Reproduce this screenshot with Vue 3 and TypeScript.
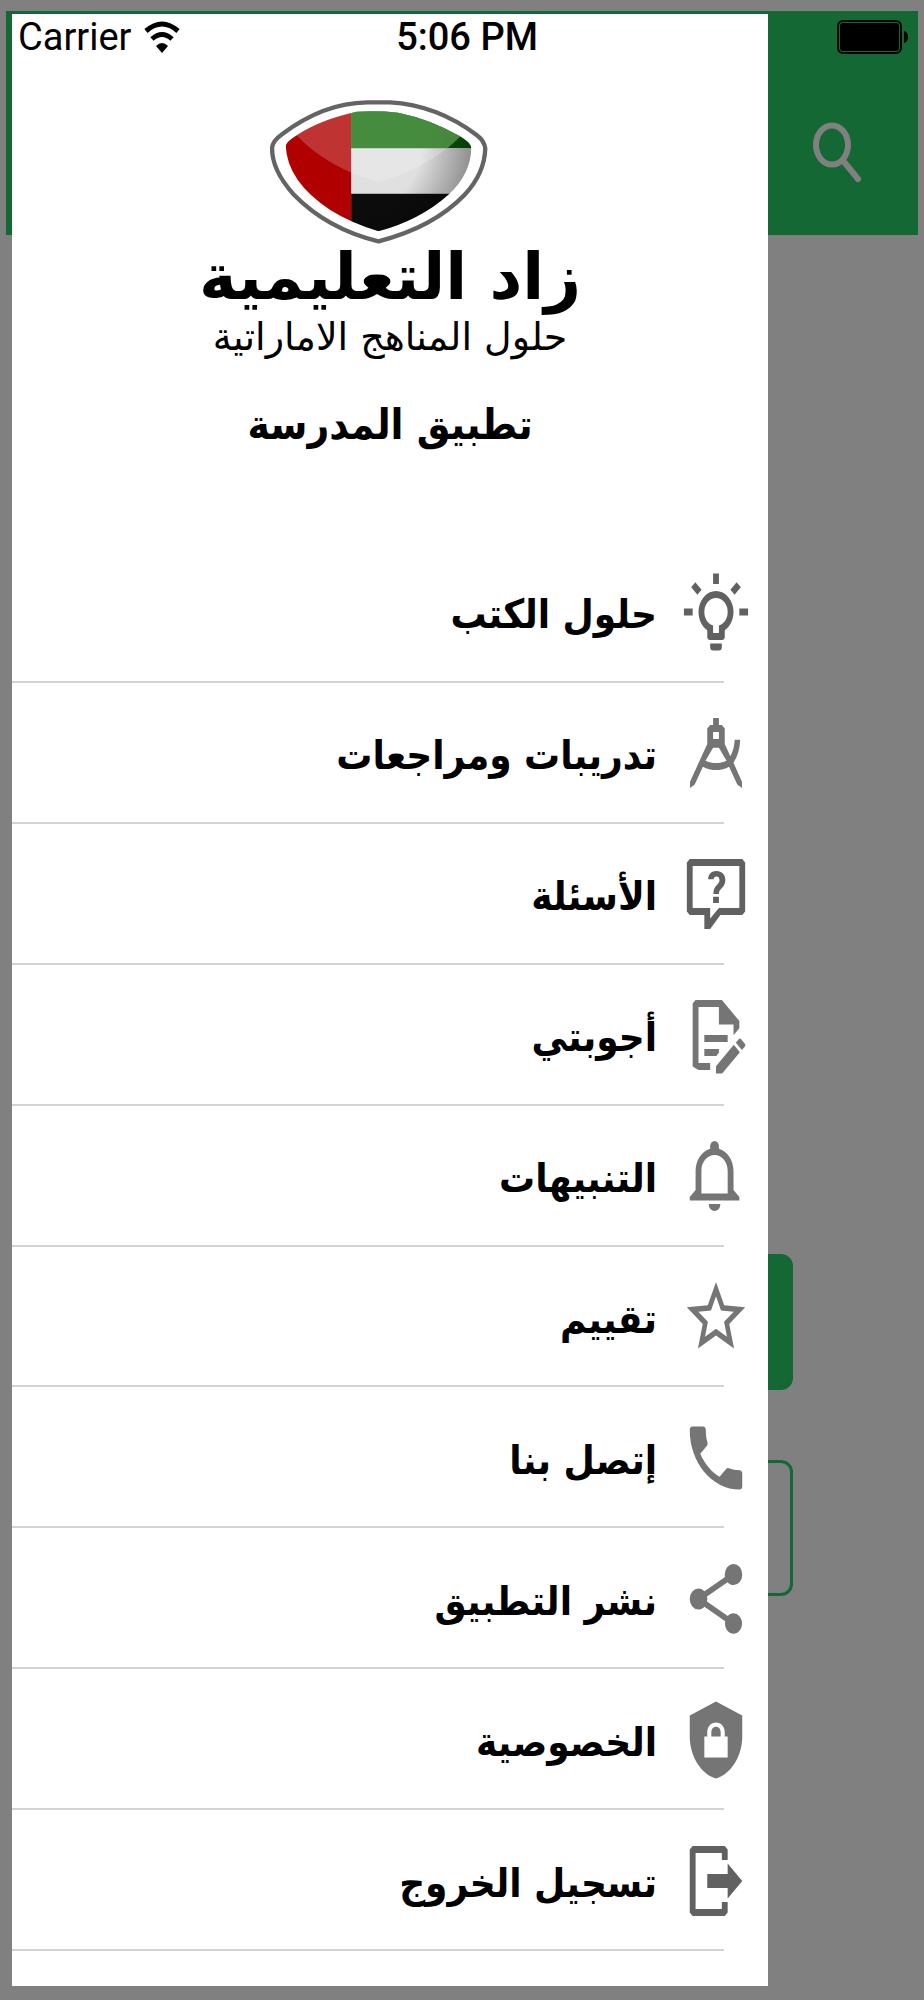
<script setup lang="ts">
interface MenuItem {
  label: string
  icon: string
  dark?: boolean
}

const items: MenuItem[] = [
  { label: 'حلول الكتب', icon: 'bulb', dark: true },
  { label: 'تدريبات ومراجعات', icon: 'compass' },
  { label: 'الأسئلة', icon: 'question', dark: true },
  { label: 'أجوبتي', icon: 'answers' },
  { label: 'التنبيهات', icon: 'bell' },
  { label: 'تقييم', icon: 'star' },
  { label: 'إتصل بنا', icon: 'phone' },
  { label: 'نشر التطبيق', icon: 'share' },
  { label: 'الخصوصية', icon: 'privacy' },
  { label: 'تسجيل الخروج', icon: 'logout', dark: true },
]

const paths: Record<string, string> = {
  bulb: 'M20,11H23V13H20V11M1,11H4V13H1V11M13,1V4H11V1H13M4.92,3.5L7.05,5.64L5.63,7.05L3.5,4.93L4.92,3.5M16.95,5.63L19.07,3.5L20.5,4.93L18.37,7.05L16.95,5.63M12,6A6,6 0 0,1 18,12C18,14.22 16.79,16.16 15,17.2V19A1,1 0 0,1 14,20H10A1,1 0 0,1 9,19V17.2C7.21,16.16 6,14.22 6,12A6,6 0 0,1 12,6M14,21V22A1,1 0 0,1 13,23H11A1,1 0 0,1 10,22V21H14M11,18H13V15.87C14.73,15.43 16,13.86 16,12A4,4 0 0,0 12,8A4,4 0 0,0 8,12C8,13.86 9.27,15.43 11,15.87V18Z',
  compass: 'M11,2H13V4H14L15,5V9.4L16.9,12.9C17.8,11.6 18.3,10.1 18.4,8.2H20.3C20.2,10.8 19.4,13 18,14.8L20.9,20.2V22L19.3,21L16.5,15.9C13.8,17.2 10.2,17.2 7.5,15.9L4.7,21L3.1,22V20.2L9,9.4V5L10,4H11V2M11,6V8H13V6H11M11,10.5L8.4,14.2C10.7,15.1 13.3,15.1 15.6,14.2L13,10.5H11Z',
  question: 'M3,2H21L22,3V17L21,18H13.5L10,22H8V18H3L2,17V3L3,2M4,4V16H10V19L13,16H20V4H4M9.3,7.8C9.3,6.3 10.4,5.4 12.2,5.4C14,5.4 15.2,6.4 15.2,8C15.2,9.1 14.6,9.8 13.8,10.5C13.2,11 13,11.3 13,12H11.1C11.1,10.7 11.5,10.1 12.3,9.4C12.9,8.9 13.2,8.6 13.2,8C13.2,7.4 12.8,7 12.2,7C11.6,7 11.2,7.3 11.2,7.8H9.3M11,12.8H13V14.6H11Z',
  answers: 'M13,2H14L20,8V10.1L18,12.1V9H13V4H6V20H10V22H6L4,21V3L5,2H13M8,12H16V14H8V12M8,16H13V17.1L12.1,18H8V16M20.2,13C20.3,13 20.5,13.1 20.6,13.2L21.9,14.5C22.1,14.7 22.1,15.1 21.9,15.3L20.9,16.3L18.8,14.2L19.8,13.2C19.9,13.1 20,13 20.2,13M20.2,16.9L14.1,23H12V20.9L18.1,14.8L20.2,16.9Z',
  bell: 'M16,17H7V10.5C7,8 9,6 11.5,6C14,6 16,8 16,10.5M18,16V10.5C18,7.43 15.86,4.86 13,4.18V3.5A1.5,1.5 0 0,0 11.5,2A1.5,1.5 0 0,0 10,3.5V4.18C7.13,4.86 5,7.43 5,10.5V16L3,18V19H20V18M11.5,22A2,2 0 0,0 13.5,20H9.5A2,2 0 0,0 11.5,22Z',
  star: 'M12,15.39L8.24,17.66L9.23,13.38L5.91,10.5L10.29,10.13L12,6.09L13.71,10.13L18.09,10.5L14.77,13.38L15.76,17.66M22,9.24L14.81,8.63L12,2L9.19,8.63L2,9.24L7.45,13.97L5.82,21L12,17.27L18.18,21L16.54,13.97L22,9.24Z',
  phone: 'M6.62,10.79C8.06,13.62 10.38,15.94 13.21,17.38L15.41,15.18C15.69,14.9 16.08,14.82 16.43,14.93C17.55,15.3 18.75,15.5 20,15.5A1,1 0 0,1 21,16.5V20A1,1 0 0,1 20,21A17,17 0 0,1 3,4A1,1 0 0,1 4,3H7.5A1,1 0 0,1 8.5,4C8.5,5.25 8.7,6.45 9.07,7.57C9.18,7.92 9.1,8.31 8.82,8.59L6.62,10.79Z',
  share: 'M18,16.08C17.24,16.08 16.56,16.38 16.04,16.85L8.91,12.7C8.96,12.47 9,12.24 9,12C9,11.76 8.96,11.53 8.91,11.3L15.96,7.19C16.5,7.69 17.21,8 18,8A3,3 0 0,0 21,5A3,3 0 0,0 18,2A3,3 0 0,0 15,5C15,5.24 15.04,5.47 15.09,5.7L8.04,9.81C7.5,9.31 6.79,9 6,9A3,3 0 0,0 3,12A3,3 0 0,0 6,15C6.79,15 7.5,14.69 8.04,14.19L15.16,18.34C15.11,18.55 15.08,18.77 15.08,19C15.08,20.61 16.39,21.91 18,21.91C19.61,21.91 20.92,20.61 20.92,19A2.92,2.92 0 0,0 18,16.08Z',
  privacy: 'M12,1L3,5V11C3,16.55 6.84,21.74 12,23C17.16,21.74 21,16.55 21,11V5L12,1M12,7C13.7,7 15,8.2 15,9.8V11H16V17H8V11H9V9.8C9,8.2 10.3,7 12,7M12,8.2C11,8.2 10.4,8.9 10.4,9.8V11H13.6V9.8C13.6,8.9 13,8.2 12,8.2Z',
  logout: 'M4,2H15L16,3V6H14V4H5V20H14V18H16V21L15,22H4L3,21V3L4,2M9,10H16V7L21,12L16,17V14H9V10Z',
}
</script>

<template>
  <div class="page" dir="rtl">
    <div class="screen">
      <header class="app-bar">
        <button class="search" type="button" aria-label="بحث">
          <svg viewBox="0 0 50 62" aria-hidden="true">
            <ellipse cx="20" cy="23" rx="16" ry="19.5" />
            <path d="M33 41 46 57" />
          </svg>
        </button>
      </header>
      <div class="actions">
        <button class="action filled" type="button" aria-label="متابعة"></button>
        <button class="action outlined" type="button" aria-label="تخطي"></button>
      </div>
    </div>

    <aside class="drawer">
      <div class="brand">
        <svg class="emblem" viewBox="80 50 670 445" aria-hidden="true">
          <defs>
            <clipPath id="shield">
              <path d="M136 196Q138 184 174 162Q240 118 350 94Q415 90 474 97Q570 116 660 168Q690 186 694 200Q694 280 625 344Q540 420 415 454Q330 428 270 390Q140 304 136 196Z" />
            </clipPath>
            <radialGradient id="shade" gradientUnits="userSpaceOnUse" cx="330" cy="190" r="390">
              <stop offset="0.55" stop-color="#000" stop-opacity="0" />
              <stop offset="1" stop-color="#000" stop-opacity="0.42" />
            </radialGradient>
          </defs>
          <path
            class="rim"
            d="M415 484Q260 446 160 343Q94 270 95 203Q96 182 126 161Q250 68 380 66H450Q590 74 710 164Q734 182 736 205Q734 280 674 344Q580 442 415 484Z"
          />
          <g clip-path="url(#shield)">
            <path fill="#b00000" d="M130 90H334V460H130Z" />
            <path fill="#0b5c0b" d="M333 88H700V204H333Z" />
            <path fill="#e0e0e0" d="M333 204H700V341H333Z" />
            <path fill="#0c0c0c" d="M333 341H700V460H333Z" />
            <path fill="url(#shade)" d="M130 88H700V460H130Z" />
            <path fill="#fff" fill-opacity="0.2" d="M168 164Q260 80 415 80Q580 80 664 166Q570 262 415 306Q260 262 168 164Z" />
            <path fill="#4a9040" fill-opacity="0.8" d="M333 88Q560 70 664 166L622 204H333Z" />
          </g>
        </svg>
        <h1 class="name">زاد التعليمية</h1>
        <p class="tagline">حلول المناهج الاماراتية</p>
        <h2 class="title">تطبيق المدرسة</h2>
      </div>

      <nav class="menu">
        <a v-for="item in items" :key="item.icon" class="item" href="#">
          <svg class="icon" :class="{ dark: item.dark }" viewBox="0 0 24 24" preserveAspectRatio="none" aria-hidden="true">
            <path fill-rule="evenodd" :d="paths[item.icon]" />
          </svg>
          <span class="label">{{ item.label }}</span>
        </a>
      </nav>
    </aside>

    <div class="status" dir="ltr">
      <div class="carrier">
        <span>Carrier</span>
        <svg class="wifi" viewBox="0 0 36 34" aria-hidden="true">
          <path class="arc" d="M2 11Q18-3 34 11M8 19Q18 10 28 19" />
          <path d="M12 26Q18 20 24 26L18 33Z" />
        </svg>
      </div>
      <span class="time">5:06 PM</span>
      <svg class="battery" viewBox="0 0 72 34" aria-hidden="true">
        <rect class="case" x="1" y="1" width="63" height="32" rx="5" />
        <rect x="3" y="3" width="59" height="28" rx="3" />
        <path d="M67 11Q71 12 71 17Q71 22 67 23Z" />
      </svg>
    </div>
  </div>
</template>

<style>
body {
  margin: 0;
  background: #808080;
}
</style>

<style scoped>
.page {
  position: relative;
  box-sizing: border-box;
  min-height: 100vh;
  padding: 11px 6px;
  background: #808080;
  color: #000;
  font-family: "DejaVu Sans Condensed", "DejaVu Sans", sans-serif;
}

.app-bar {
  box-sizing: border-box;
  display: flex;
  justify-content: flex-start;
  height: 224px;
  padding: 111px 56px 0;
  background: #146834;
}

.search {
  width: 50px;
  height: 62px;
  padding: 0;
  border: 0;
  background: none;
}

.search svg {
  display: block;
  width: 50px;
  height: 62px;
  fill: none;
  stroke: #808080;
  stroke-width: 6;
  stroke-linecap: round;
}

.actions {
  display: flex;
  flex-direction: column;
  gap: 70px;
  padding: 1019px 125px 0;
}

.action {
  box-sizing: border-box;
  height: 136px;
  border: 3px solid #146834;
  border-radius: 12px;
  background: none;
}

.action.filled {
  background: #146834;
}

.drawer {
  position: absolute;
  top: 14px;
  bottom: 14px;
  left: 12px;
  right: 156px;
  box-sizing: border-box;
  display: flex;
  flex-direction: column;
  padding-bottom: 35px;
  background: #fff;
}

.brand {
  box-sizing: border-box;
  display: flex;
  flex-direction: column;
  align-items: center;
  height: 528px;
  padding-top: 83px;
}

.emblem {
  flex: none;
  width: 223px;
  height: 148px;
  margin-right: 24px;
}

.rim {
  fill: #fff;
  stroke: #646464;
  stroke-width: 13;
}

.name,
.tagline,
.title {
  margin: 0;
  white-space: nowrap;
}

.name {
  font: bold 64px/64px "DejaVu Sans", sans-serif;
}

.tagline {
  font: 38px/56px "DejaVu Sans", sans-serif;
}

.title {
  margin-top: 28px;
  font-size: 42px;
  line-height: 64px;
}

.menu {
  flex: 1;
  display: flex;
  flex-direction: column;
}

.item {
  flex: 1;
  position: relative;
  display: flex;
  align-items: center;
  gap: 24px;
  padding-right: 17px;
  color: #000;
  text-decoration: none;
}

.item::after {
  content: "";
  position: absolute;
  right: 44px;
  bottom: 0;
  left: 0;
  height: 2px;
  background: #d3d3d6;
}

.icon {
  flex: none;
  width: 70px;
  height: 84px;
  fill: #757575;
}

.icon.dark {
  fill: #616161;
}

.label {
  padding-top: 4px;
  font-size: 40px;
  font-weight: bold;
  line-height: 56px;
  white-space: nowrap;
}

.status {
  position: absolute;
  top: 14px;
  left: 18px;
  right: 8px;
  display: grid;
  grid-template-columns: 1fr auto 1fr;
  align-items: center;
  height: 46px;
  font: 38px/46px Roboto, sans-serif;
}

.carrier {
  display: flex;
  align-items: center;
  gap: 13px;
}

.wifi {
  width: 36px;
  height: 34px;
}

.arc {
  fill: none;
  stroke: #000;
  stroke-width: 5;
}

.time {
  font-weight: 500;
}

.battery {
  justify-self: end;
  width: 72px;
  height: 34px;
  margin-right: 7px;
}

.case {
  fill: none;
  stroke: #000;
  stroke-width: 2;
}
</style>
